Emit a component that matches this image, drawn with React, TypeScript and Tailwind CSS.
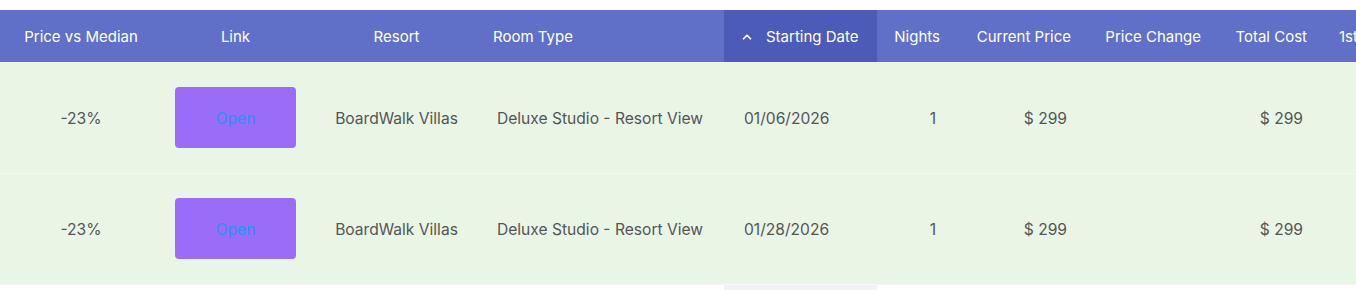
import { ChevronUp } from "lucide-react"

interface Row {
  pvm: string
  resort: string
  room: string
  date: string
  nights: number
  price: string
  change: string
  total: string
}

const rows: Row[] = [
  {
    pvm: "-23%",
    resort: "BoardWalk Villas",
    room: "Deluxe Studio - Resort View",
    date: "01/06/2026",
    nights: 1,
    price: "$ 299",
    change: "",
    total: "$ 299",
  },
  {
    pvm: "-23%",
    resort: "BoardWalk Villas",
    room: "Deluxe Studio - Resort View",
    date: "01/28/2026",
    nights: 1,
    price: "$ 299",
    change: "",
    total: "$ 299",
  },
]

export default function App() {
  return (
    <div className="w-[1356px] h-[290px] overflow-hidden bg-white pt-[10px] font-['Inter',_'Liberation_Sans',_sans-serif]">
      <table className="table-fixed border-collapse w-[1460px] text-[15px]">
        <colgroup>
          <col className="w-[162px]" />
          <col className="w-[147px]" />
          <col className="w-[175px]" />
          <col className="w-[240px]" />
          <col className="w-[153px]" />
          <col className="w-[79px]" />
          <col className="w-[131px]" />
          <col className="w-[130px]" />
          <col className="w-[106px]" />
          <col className="w-[137px]" />
        </colgroup>
        <thead>
          <tr className="h-[52px] bg-[#6070c8] text-white">
            <th className="font-normal text-center pt-[2px]">Price vs Median</th>
            <th className="font-normal text-center pt-[2px]">Link</th>
            <th className="font-normal text-center pt-[2px]">Resort</th>
            <th className="font-normal text-left pl-[9px] pt-[2px]">Room Type</th>
            <th className="font-normal text-left bg-[#4c5bb8] pl-4 pt-[2px]">
              <div className="flex items-center">
                <ChevronUp className="w-[14px] h-[14px] mr-[12px]" strokeWidth={3} />
                <span>Starting Date</span>
              </div>
            </th>
            <th className="font-normal text-right pr-4 pt-[2px]">Nights</th>
            <th className="font-normal text-right pr-4 pt-[2px]">Current Price</th>
            <th className="font-normal text-right pr-4 pt-[2px]">Price Change</th>
            <th className="font-normal text-right pr-4 pt-[2px]">Total Cost</th>
            <th className="font-normal text-left pl-4 pt-[2px] whitespace-nowrap">1st Night</th>
          </tr>
        </thead>
        <tbody className="text-[#555] text-[15.6px]">
          {rows.map((r, i) => (
            <tr key={i} className="h-[111px] bg-[#e9f5e5] border-b border-[#f4faf2]">
              <td className="text-center pt-[2px]">{r.pvm}</td>
              <td className="text-center">
                <a className="inline-flex items-center justify-center w-[121px] h-[61px] pt-[2px] rounded-[4px] bg-[#9a6cf8] text-[#2196f3] text-[15.6px]">
                  Open
                </a>
              </td>
              <td className="text-center pt-[2px]">{r.resort}</td>
              <td className="text-left pl-[13px] pt-[2px] whitespace-nowrap">{r.room}</td>
              <td className="text-left pl-5 pt-[2px]">{r.date}</td>
              <td className="text-right pr-5 pt-[2px]">{r.nights}</td>
              <td className="text-right pr-5 pt-[2px]">{r.price}</td>
              <td className="text-right pr-5 pt-[2px]">{r.change}</td>
              <td className="text-right pr-5 pt-[2px]">{r.total}</td>
              <td></td>
            </tr>
          ))}
          <tr className="h-[6px]">
            <td colSpan={4}></td>
            <td className="bg-[#f1f2f8]"></td>
            <td colSpan={5}></td>
          </tr>
        </tbody>
      </table>
    </div>
  )
}
